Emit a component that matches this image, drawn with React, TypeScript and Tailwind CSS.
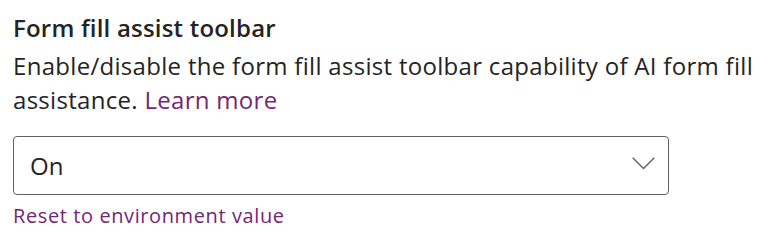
export default function App() {
  return (
    <div className="w-[775px] h-[243px] bg-white pl-[13px] pt-[11px] font-['Segoe_UI','Open_Sans',sans-serif] text-[#242424]">
      <h2 className="text-[24px] font-semibold leading-[34px] tracking-[0.2px]">Form fill assist toolbar</h2>
      <p className="text-[24px] leading-[34px] mt-[4px] tracking-[0.3px]">
        Enable/disable the form fill assist toolbar capability of AI form fill assistance.{' '}
        <a href="#" className="text-[#742774]">Learn more</a>
      </p>
      <div className="mt-[19px] w-[656px] h-[59px] border border-[#616161] rounded-[4px] flex items-center justify-between pl-[16px] pr-[13px]">
        <span className="text-[24px] leading-[34px]">On</span>
        <svg width="23" height="13" viewBox="0 0 23 13" fill="none" className="mb-[4px]">
          <polyline points="0.7,0.7 11.5,11.5 22.3,0.7" stroke="#616161" strokeWidth="1.4" />
        </svg>
      </div>
      <a href="#" className="block mt-[9px] text-[20px] leading-[24px] tracking-[0.6px] text-[#742774]">
        Reset to environment value
      </a>
    </div>
  );
}
